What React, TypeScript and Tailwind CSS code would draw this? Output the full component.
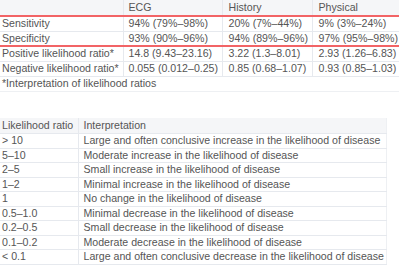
import React from 'react';

const accuracy = [
  { label: 'Sensitivity', ecg: '94% (79%–98%)', history: '20% (7%–44%)', physical: '9% (3%–24%)' },
  { label: 'Specificity', ecg: '93% (90%–96%)', history: '94% (89%–96%)', physical: '97% (95%–98%)' },
  { label: 'Positive likelihood ratio*', ecg: '14.8 (9.43–23.16)', history: '3.22 (1.3–8.01)', physical: '2.93 (1.26–6.83)' },
  { label: 'Negative likelihood ratio*', ecg: '0.055 (0.012–0.25)', history: '0.85 (0.68–1.07)', physical: '0.93 (0.85–1.03)' },
];

const ratios = [
  ['> 10', 'Large and often conclusive increase in the likelihood of disease'],
  ['5–10', 'Moderate increase in the likelihood of disease'],
  ['2–5', 'Small increase in the likelihood of disease'],
  ['1–2', 'Minimal increase in the likelihood of disease'],
  ['1', 'No change in the likelihood of disease'],
  ['0.5–1.0', 'Minimal decrease in the likelihood of disease'],
  ['0.2–0.5', 'Small decrease in the likelihood of disease'],
  ['0.1–0.2', 'Moderate decrease in the likelihood of disease'],
  ['< 0.1', 'Large and often conclusive decrease in the likelihood of disease'],
];

export default function App() {
  return (
    <div className="w-[399px] h-[275px] overflow-hidden bg-white text-[10.6px] leading-none text-[#555] font-['Liberation_Sans',Arial,sans-serif]">
      <table className="w-full border-collapse table-fixed">
        <colgroup>
          <col className="w-[123px]" />
          <col className="w-[99px]" />
          <col className="w-[90px]" />
          <col />
        </colgroup>
        <thead>
          <tr className="h-[16px] bg-[#f5f6f8] border-b-2 border-[#f26466]">
            <th className="pl-[2px] font-normal text-left border-r border-[#e6e9ee]"></th>
            <th className="pl-[5px] font-normal text-left border-r border-[#e6e9ee]">ECG</th>
            <th className="pl-[6px] font-normal text-left border-r border-[#e6e9ee]">History</th>
            <th className="pl-[6px] font-normal text-left">Physical</th>
          </tr>
        </thead>
        <tbody>
          {accuracy.map((r, i) => (
            <tr
              key={r.label}
              className={`h-[15px] border-b ${i === 1 ? 'border-b-2 border-[#f26466]' : 'border-[#e6e9ee]'}`}
            >
              <td className="pl-[2px] border-r border-[#e6e9ee] whitespace-nowrap">{r.label}</td>
              <td className="pl-[5px] border-r border-[#e6e9ee] whitespace-nowrap">{r.ecg}</td>
              <td className="pl-[6px] border-r border-[#e6e9ee] whitespace-nowrap">{r.history}</td>
              <td className="pl-[6px] whitespace-nowrap">{r.physical}</td>
            </tr>
          ))}
          <tr className="h-[15px] border-b border-[#eef0f3]">
            <td colSpan={4} className="pl-[2px]">*Interpretation of likelihood ratios</td>
          </tr>
        </tbody>
      </table>

      <table className="mt-[26px] w-[387px] border-collapse table-fixed border-r border-[#eef0f3]">
        <colgroup>
          <col className="w-[78px]" />
          <col />
        </colgroup>
        <thead>
          <tr className="h-[16px] bg-[#f5f6f8] border-b border-[#e6e9ee]">
            <th className="pl-[2px] font-normal text-left whitespace-nowrap">Likelihood ratio</th>
            <th className="pl-[5px] font-normal text-left border-l border-[#e6e9ee]">Interpretation</th>
          </tr>
        </thead>
        <tbody>
          {ratios.map(([ratio, text]) => (
            <tr key={ratio} className="h-[14.5px] border-b border-[#e6e9ee]">
              <td className="pl-[2px] whitespace-nowrap">{ratio}</td>
              <td className="pl-[5px] border-l border-[#e6e9ee] whitespace-nowrap">{text}</td>
            </tr>
          ))}
        </tbody>
      </table>
    </div>
  );
}
